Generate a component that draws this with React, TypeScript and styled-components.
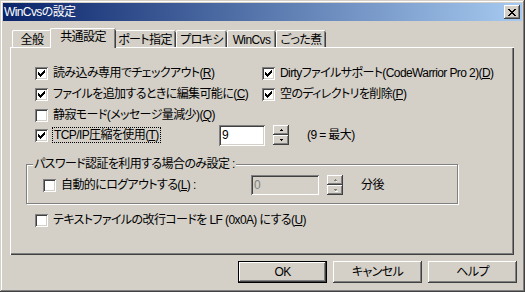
import React from "react";
import styled, { createGlobalStyle, css } from "styled-components";

const FACE = `"Liberation Sans", "Noto Sans CJK JP", sans-serif`;

const GlobalStyle = createGlobalStyle`
  html, body { margin: 0; padding: 0; background: #d4d0c8; }
  body { font-family: ${FACE}; font-size: 12px; color: #000; }
  * { box-sizing: border-box; }
`;

const raised = css`
  box-shadow: inset -1px -1px #404040, inset 1px 1px #fff, inset -2px -2px #808080,
    inset 2px 2px #d4d0c8;
`;
const sunken = css`
  box-shadow: inset 1px 1px #808080, inset -1px -1px #fff, inset 2px 2px #404040,
    inset -2px -2px #d4d0c8;
`;

const Window = styled.div`
  width: 525px;
  height: 292px;
  padding: 3px;
  background: #d4d0c8;
  display: flex;
  flex-direction: column;
  box-shadow: inset -1px -1px #404040, inset 1px 1px #d4d0c8, inset -2px -2px #808080,
    inset 2px 2px #fff;
  font-feature-settings: "palt";
  letter-spacing: -0.6px;
  line-height: 14px;
`;

const TitleBar = styled.div`
  height: 18px;
  display: flex;
  align-items: center;
  justify-content: space-between;
  padding: 0 2px 0 1px;
  background: linear-gradient(to right, #0a246a, #a6caf0);
  color: #fff;
`;

const CloseButton = styled.div`
  width: 16px;
  height: 14px;
  background: #d4d0c8;
  ${raised};
  display: flex;
  align-items: center;
  justify-content: center;
  padding-right: 1px;
`;

const Content = styled.div`
  display: flex;
  flex-direction: column;
  padding: 7px 0 0 7px;
`;

const TabStrip = styled.div`
  display: flex;
  align-items: flex-end;
  height: 19px;
  padding-left: 2px;
  position: relative;
  z-index: 1;
`;

const Tab = styled.div<{ $w: number; $active?: boolean }>`
  width: ${(p) => p.$w + (p.$active ? 4 : 0)}px;
  height: ${(p) => (p.$active ? 20 : 17)}px;
  margin: ${(p) => (p.$active ? "0 -2px -1px -2px" : "0")};
  padding-top: ${(p) => (p.$active ? 2 : 3)}px;
  text-align: center;
  background: #d4d0c8;
  border-top-left-radius: 2px;
  border-top-right-radius: 2px;
  box-shadow: inset 1px 0 #fff, inset 0 1px #fff, inset -1px 0 #404040, inset -2px 0 #808080;
  position: relative;
  z-index: ${(p) => (p.$active ? 2 : 1)};
  white-space: nowrap;
`;

const Panel = styled.div`
  width: 504px;
  height: 208px;
  padding: 18px 0 0 16px;
  box-shadow: inset 1px 1px #fff, inset -1px -1px #404040, inset -2px -2px #808080;
  display: flex;
  flex-direction: column;
`;

const OptionGrid = styled.div`
  display: grid;
  grid-template-columns: 227px auto;
  grid-auto-rows: 16px;
  row-gap: 5px;
  padding-left: 9px;
`;

const SpinRow = styled.div`
  display: flex;
  align-items: center;
  height: 22px;
  margin-top: 1px;
  padding-left: 9px;
`;

const CheckItem = styled.label<{ $w?: number }>`
  display: flex;
  align-items: center;
  gap: 5px;
  height: 16px;
  white-space: nowrap;
  ${(p) => (p.$w ? `width: ${p.$w}px; flex: none;` : "")}
`;

const Box = styled.span`
  width: 13px;
  height: 13px;
  flex: none;
  background: #fff;
  ${sunken};
  display: flex;
  align-items: center;
  justify-content: center;
`;

const Focus = styled.span`
  outline: 1px dotted #000;
  outline-offset: 0;
  padding: 0 1px;
`;

const Edit = styled.div<{ $w: number; $h: number; $disabled?: boolean }>`
  width: ${(p) => p.$w}px;
  height: ${(p) => p.$h}px;
  flex: none;
  background: ${(p) => (p.$disabled ? "#d4d0c8" : "#fff")};
  color: ${(p) => (p.$disabled ? "#808080" : "#000")};
  ${sunken};
  padding: 3px 0 0 3px;
`;

const SpinCol = styled.div<{ $h: number }>`
  display: flex;
  flex-direction: column;
  width: 16px;
  height: ${(p) => p.$h}px;
  margin-left: 8px;
  flex: none;
`;

const SpinHalf = styled.div`
  flex: 1;
  background: #d4d0c8;
  ${raised};
  display: flex;
  align-items: center;
  justify-content: center;
`;

const Note = styled.span`
  margin-left: 18px;
  white-space: nowrap;
`;

const Group = styled.div`
  position: relative;
  width: 432px;
  height: 40px;
  margin-top: 18px;
  border: 1px solid #808080;
  box-shadow: inset 1px 1px #fff, 1px 1px #fff;
  display: flex;
  align-items: center;
  padding: 2px 0 0 16px;
`;

const GroupLabel = styled.span`
  position: absolute;
  left: 6px;
  top: -8px;
  padding: 0 1px;
  background: #d4d0c8;
  white-space: nowrap;
`;

const LastRow = styled.div`
  margin-top: 8px;
  padding-left: 9px;
`;

const ButtonRow = styled.div`
  display: flex;
  justify-content: flex-end;
  gap: 6px;
  margin-top: 6px;
  padding-right: 5px;
`;

const Button = styled.div<{ $default?: boolean }>`
  width: 89px;
  height: 22px;
  display: flex;
  align-items: center;
  justify-content: center;
  background: #d4d0c8;
  ${(p) =>
    p.$default
      ? css`
          box-shadow: inset 0 0 0 1px #000, inset -2px -2px #404040, inset 2px 2px #fff,
            inset -3px -3px #808080;
        `
      : raised};
`;

const CheckMark = () => (
  <svg width="7" height="7" viewBox="0 0 7 7" shapeRendering="crispEdges">
    {[2, 3, 4, 3, 2, 1, 0].map((t, i) => (
      <rect key={i} x={i} y={t} width="1" height="3" fill="#000" />
    ))}
  </svg>
);

const Checkbox = ({ checked }: { checked?: boolean }) => <Box>{checked && <CheckMark />}</Box>;

const CloseGlyph = () => (
  <svg width="8" height="7" viewBox="0 0 8 7" shapeRendering="crispEdges">
    {[0, 1, 2, 3, 4, 5, 6].map((r) => {
      const a = Math.min(r, 6 - r);
      return (
        <g key={r}>
          <rect x={a} y={r} width="2" height="1" fill="#000" />
          <rect x={6 - a} y={r} width="2" height="1" fill="#000" />
        </g>
      );
    })}
  </svg>
);

const Arrow = ({ up, disabled }: { up?: boolean; disabled?: boolean }) => (
  <svg width="5" height="3" viewBox="0 0 5 3" shapeRendering="crispEdges">
    {disabled && (
      <path d={up ? "M2 1h1v1h1v1H1V2h1z" : "M1 1h3v1H3v1H2V2H1z"} fill="#fff" transform="translate(1,1)" />
    )}
    <path
      d={up ? "M2 0h1v1h1v1H1V1h1z" : "M1 0h3v1H3v1H2V1H1z"}
      fill={disabled ? "#808080" : "#000"}
    />
  </svg>
);

const Spin = ({ h, disabled }: { h: number; disabled?: boolean }) => (
  <SpinCol $h={h}>
    <SpinHalf>
      <Arrow up disabled={disabled} />
    </SpinHalf>
    <SpinHalf>
      <Arrow disabled={disabled} />
    </SpinHalf>
  </SpinCol>
);

export default function App() {
  return (
    <>
      <GlobalStyle />
      <Window>
        <TitleBar>
          <span>WinCvsの設定</span>
          <CloseButton>
            <CloseGlyph />
          </CloseButton>
        </TitleBar>
        <Content>
          <TabStrip>
            <Tab $w={40}>全般</Tab>
            <Tab $w={62} $active>
              共通設定
            </Tab>
            <Tab $w={62}>ポート指定</Tab>
            <Tab $w={51}>プロキシ</Tab>
            <Tab $w={49}>WinCvs</Tab>
            <Tab $w={50}>ごった煮</Tab>
          </TabStrip>
          <Panel>
            <OptionGrid>
              <CheckItem>
                <Checkbox checked />
                <span>
                  読み込み専用でチェックアウト(<u>R</u>)
                </span>
              </CheckItem>
              <CheckItem>
                <Checkbox checked />
                <span>
                  Dirtyファイルサポート(CodeWarrior Pro 2)(<u>D</u>)
                </span>
              </CheckItem>
              <CheckItem>
                <Checkbox checked />
                <span>
                  ファイルを追加するときに編集可能に(<u>C</u>)
                </span>
              </CheckItem>
              <CheckItem>
                <Checkbox checked />
                <span>
                  空のディレクトリを削除(<u>P</u>)
                </span>
              </CheckItem>
              <CheckItem>
                <Checkbox />
                <span>
                  静寂モード(メッセージ量減少)(<u>Q</u>)
                </span>
              </CheckItem>
            </OptionGrid>
            <SpinRow>
              <CheckItem $w={184}>
                <Checkbox checked />
                <Focus>
                  TCP/IP圧縮を使用(<u>T</u>)
                </Focus>
              </CheckItem>
              <Edit $w={46} $h={21}>
                9
              </Edit>
              <Spin h={20} />
              <Note>(9 = 最大)</Note>
            </SpinRow>
            <Group>
              <GroupLabel>パスワード認証を利用する場合のみ設定 :</GroupLabel>
              <CheckItem $w={208}>
                <Checkbox />
                <span>
                  自動的にログアウトする(<u>L</u>) :
                </span>
              </CheckItem>
              <Edit $w={68} $h={20} $disabled>
                0
              </Edit>
              <Spin h={20} disabled />
              <Note>分後</Note>
            </Group>
            <LastRow>
              <CheckItem>
                <Checkbox />
                <span>
                  テキストファイルの改行コードを LF (0x0A) にする(<u>U</u>)
                </span>
              </CheckItem>
            </LastRow>
          </Panel>
          <ButtonRow>
            <Button $default>OK</Button>
            <Button>キャンセル</Button>
            <Button>ヘルプ</Button>
          </ButtonRow>
        </Content>
      </Window>
    </>
  );
}
